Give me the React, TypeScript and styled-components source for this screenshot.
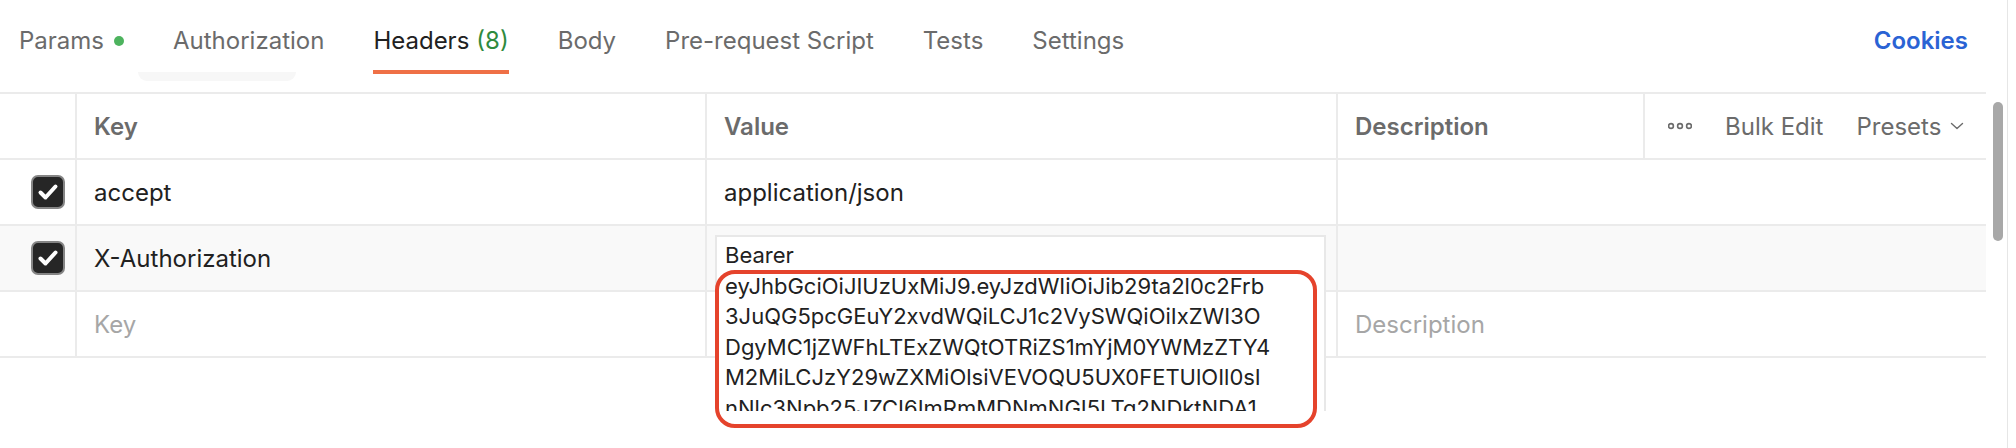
import styled, { createGlobalStyle } from 'styled-components';

const GlobalStyle = createGlobalStyle`
    html, body {
        margin: 0;
        padding: 0;
        background: #ffffff;
    }
    body {
        font-family: Inter, "Noto Sans", "Liberation Sans", sans-serif;
        -webkit-font-smoothing: antialiased;
    }
`

const Page = styled.div`
    display: flex;
    width: 2016px;
    height: 448px;
    overflow: hidden;
    background: #ffffff;
`

const Main = styled.div`
    width: 1986px;
    display: flex;
    flex-direction: column;
`

const Gutter = styled.div`
    width: 22px;
    box-sizing: border-box;
    padding: 102px 0 0 7px;
    border-right: 1px solid #e6e6e6;
`

const Thumb = styled.div`
    width: 10px;
    height: 139px;
    border-radius: 5px;
    background: #a8a8a8;
`

const TabBar = styled.div`
    height: 92px;
    box-sizing: border-box;
    display: flex;
    align-items: flex-start;
    gap: 49px;
    padding: 0 18px 0 19px;
`

const Tab = styled.div<{ $active?: boolean; $ghost?: boolean }>`
    position: relative;
    display: flex;
    align-items: center;
    padding: 26px 0 14px;
    line-height: 30px;
    font-size: 24px;
    color: ${p => p.$active ? '#212121' : '#6b6b6b'};
    border-bottom: 4px solid ${p => p.$active ? '#ef7046' : 'transparent'};
    white-space: nowrap;
    ${p => p.$ghost && `
        &::after {
            content: '';
            position: absolute;
            left: -35px;
            right: 28px;
            top: 72px;
            height: 9px;
            border-radius: 0 0 22px 22px;
            background: #f7f7f7;
        }
    `}
`

const Count = styled.span`
    color: #2f8a3e;
    margin-left: 7px;
`

const Dot = styled.span`
    width: 10px;
    height: 10px;
    border-radius: 50%;
    background: #4db35e;
    margin-left: 10px;
`

const CookiesLink = styled.a`
    margin-left: auto;
    padding-top: 26px;
    line-height: 30px;
    font-size: 24px;
    font-weight: 600;
    color: #2a63d4;
    text-decoration: none;
`

const Table = styled.div`
    display: grid;
    grid-template-columns: 77px 630px 631px 307px 1fr;
    border-top: 2px solid #ebebeb;
`

const Row = styled.div<{ $hover?: boolean }>`
    display: contents;
    & > div {
        background: ${p => p.$hover ? '#f9f9f9' : '#ffffff'};
    }
`

const Cell = styled.div<{ $span?: number; $last?: boolean }>`
    position: relative;
    height: 66px;
    box-sizing: border-box;
    display: flex;
    align-items: center;
    padding-left: 17px;
    border-bottom: 2px solid #ebebeb;
    border-right: ${p => p.$last ? 'none' : '2px solid #ebebeb'};
    grid-column: ${p => p.$span ? `span ${p.$span}` : 'auto'};
    font-size: 24px;
    color: #212121;
    white-space: nowrap;
`

const HeadCell = styled(Cell)`
    font-weight: 600;
    color: #6b6b6b;
`

const CheckCell = styled(Cell)`
    justify-content: flex-end;
    padding: 0 10px 0 0;
`

const Placeholder = styled.span`
    color: #a6a6a6;
`

const Actions = styled(Cell)`
    gap: 33px;
    padding-left: 23px;
    font-weight: 400;
    color: #6b6b6b;
`

const Presets = styled.span`
    display: flex;
    align-items: center;
    gap: 9px;
`

const CheckBox = styled.span`
    width: 34px;
    height: 34px;
    box-sizing: border-box;
    border-radius: 7px;
    background: #262626;
    border: 2px solid #858585;
    display: flex;
    align-items: center;
    justify-content: center;
`

const Editor = styled.div`
    position: absolute;
    left: 8px;
    top: 9px;
    width: 611px;
    height: 176px;
    box-sizing: border-box;
    overflow: hidden;
    background: #ffffff;
    border: 2px solid #e8e8e8;
    border-bottom: none;
    padding: 3px 8px 0;
    z-index: 2;
`

const EditorLine = styled.div`
    font-size: 22px;
    line-height: 30.5px;
    color: #212121;
    white-space: nowrap;
`

const Highlight = styled.div`
    position: absolute;
    left: 8px;
    top: 44px;
    width: 602px;
    height: 158px;
    box-sizing: border-box;
    border: 4px solid #e5432c;
    border-radius: 20px;
    z-index: 3;
    pointer-events: none;
`

const tokenLines = [
    'Bearer',
    'eyJhbGciOiJIUzUxMiJ9.eyJzdWIiOiJib29ta2l0c2Frb',
    '3JuQG5pcGEuY2xvdWQiLCJ1c2VySWQiOiIxZWI3O',
    'DgyMC1jZWFhLTExZWQtOTRiZS1mYjM0YWMzZTY4',
    'M2MiLCJzY29wZXMiOlsiVEVOQU5UX0FETUlOIl0sI',
    'nNlc3Npb25JZCI6ImRmMDNmNGI5LTg2NDktNDA1',
];

const Check = () => (
    <CheckBox>
        <svg width="24" height="24" viewBox="0 0 24 24">
            <path d="M4.5 12.5 L9.5 17.5 L19.5 6.5" fill="none" stroke="#ffffff" strokeWidth="4" strokeLinecap="round" strokeLinejoin="round" />
        </svg>
    </CheckBox>
)

const Dots = () => (
    <svg width="24" height="8" viewBox="0 0 24 8">
        {[3, 12, 21].map(cx => (
            <circle key={cx} cx={cx} cy="4" r="2.4" fill="none" stroke="#6b6b6b" strokeWidth="1.6" />
        ))}
    </svg>
)

const Chevron = () => (
    <svg width="14" height="8" viewBox="0 0 14 8">
        <path d="M1.5 1.5 L7 6.5 L12.5 1.5" fill="none" stroke="#6b6b6b" strokeWidth="1.4" strokeLinecap="round" strokeLinejoin="round" />
    </svg>
)

const App = () => {
    return (
        <>
            <GlobalStyle />
            <Page>
                <Main>
                    <TabBar>
                        <Tab>Params<Dot /></Tab>
                        <Tab $ghost>Authorization</Tab>
                        <Tab $active>Headers<Count>(8)</Count></Tab>
                        <Tab>Body</Tab>
                        <Tab>Pre-request Script</Tab>
                        <Tab>Tests</Tab>
                        <Tab>Settings</Tab>
                        <CookiesLink>Cookies</CookiesLink>
                    </TabBar>
                    <Table>
                        <Row>
                            <HeadCell />
                            <HeadCell>Key</HeadCell>
                            <HeadCell>Value</HeadCell>
                            <HeadCell>Description</HeadCell>
                            <Actions $last>
                                <Dots />
                                <span>Bulk Edit</span>
                                <Presets>Presets<Chevron /></Presets>
                            </Actions>
                        </Row>
                        <Row>
                            <CheckCell><Check /></CheckCell>
                            <Cell>accept</Cell>
                            <Cell>application/json</Cell>
                            <Cell $span={2} $last />
                        </Row>
                        <Row $hover>
                            <CheckCell><Check /></CheckCell>
                            <Cell>X-Authorization</Cell>
                            <Cell>
                                <Editor>
                                    {tokenLines.map((line, i) => (
                                        <EditorLine key={i}>{line}</EditorLine>
                                    ))}
                                </Editor>
                                <Highlight />
                            </Cell>
                            <Cell $span={2} $last />
                        </Row>
                        <Row>
                            <CheckCell />
                            <Cell><Placeholder>Key</Placeholder></Cell>
                            <Cell />
                            <Cell $span={2} $last><Placeholder>Description</Placeholder></Cell>
                        </Row>
                    </Table>
                </Main>
                <Gutter>
                    <Thumb />
                </Gutter>
            </Page>
        </>
    )
}

export default App;
